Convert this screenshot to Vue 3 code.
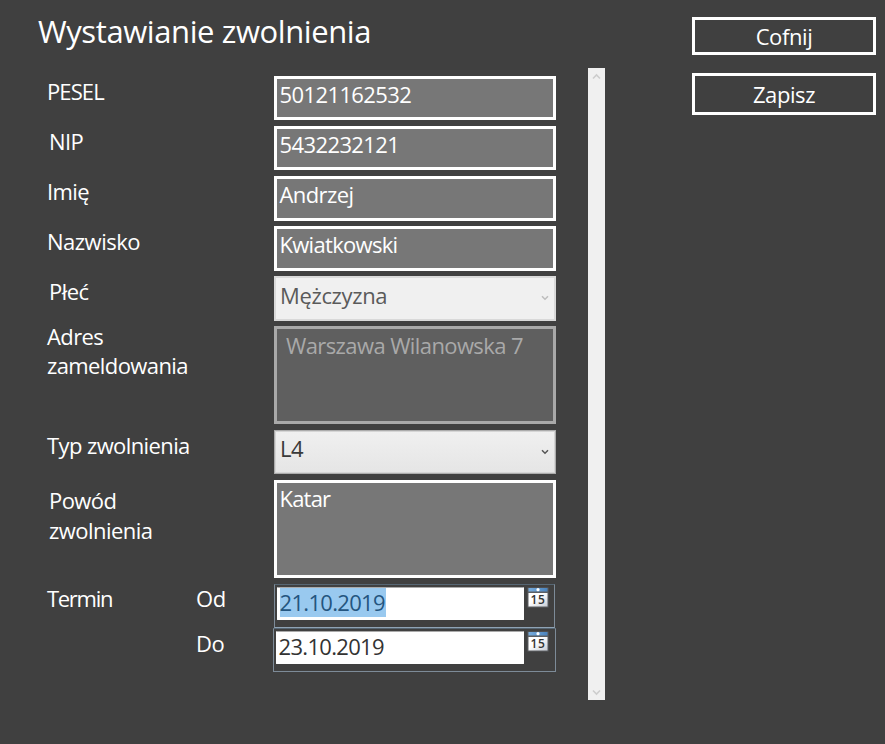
<script setup>
import { ref } from 'vue'

const rows = ref([
  { id: 'pesel', label: 'PESEL', kind: 'text', value: '50121162532' },
  { id: 'nip', label: 'NIP', kind: 'text', value: '5432232121' },
  { id: 'imie', label: 'Imię', kind: 'text', value: 'Andrzej' },
  { id: 'nazwisko', label: 'Nazwisko', kind: 'text', value: 'Kwiatkowski' },
  { id: 'plec', label: 'Płeć', kind: 'select', value: 'Mężczyzna', disabled: true },
  { id: 'adres', label: 'Adres zameldowania', kind: 'area', value: 'Warszawa Wilanowska 7', disabled: true },
  { id: 'typ', label: 'Typ zwolnienia', kind: 'select', value: 'L4' },
  { id: 'powod', label: 'Powód zwolnienia', kind: 'area', value: 'Katar' },
  { id: 'od', label: 'Termin', sub: 'Od', kind: 'date', value: '21.10.2019', selected: true },
  { id: 'do', label: '', sub: 'Do', kind: 'date', value: '23.10.2019' },
])
</script>

<template>
  <div class="window">
    <main class="form">
      <h1>Wystawianie zwolnienia</h1>
      <div v-for="row in rows" :key="row.id" class="row" :class="[row.kind, row.id]">
        <div class="label">{{ row.label }}</div>
        <div class="sub">{{ row.sub }}</div>
        <div class="control" :class="{ disabled: row.disabled }">
          <template v-if="row.kind === 'date'">
            <div class="date-input"><span :class="{ selected: row.selected }">{{ row.value }}</span></div>
            <svg class="calendar" width="22" height="21" viewBox="0 0 22 21">
              <defs>
                <linearGradient :id="'head-' + row.id" x1="0" x2="1" y1="0" y2="0">
                  <stop offset="0" stop-color="#78acdc" />
                  <stop offset="1" stop-color="#4a83bd" />
                </linearGradient>
                <linearGradient :id="'page-' + row.id" x1="0" x2="1" y1="0" y2="1">
                  <stop offset="0.4" stop-color="#ffffff" />
                  <stop offset="1" stop-color="#c9ced6" />
                </linearGradient>
              </defs>
              <rect x="0.5" y="0.5" width="21" height="20" fill="#5c5f63" />
              <rect x="1.5" y="1" width="19" height="3.5" :fill="`url(#head-${row.id})`" />
              <circle cx="11" cy="2.7" r="1.6" fill="#fff" />
              <rect x="1.5" y="6" width="19" height="13.5" :fill="`url(#page-${row.id})`" />
              <text x="11" y="17" text-anchor="middle" class="day">15</text>
            </svg>
          </template>
          <template v-else>
            <span class="value">{{ row.value }}</span>
            <svg v-if="row.kind === 'select'" class="chevron" width="8" height="6" viewBox="0 0 8 6">
              <path d="M1 1.2 L4 4.2 L7 1.2" />
            </svg>
          </template>
        </div>
      </div>
    </main>
    <div class="scrollbar">
      <svg width="9" height="7" viewBox="0 0 9 7"><path d="M1 5.5 L4.5 2 L8 5.5" /></svg>
      <svg width="9" height="7" viewBox="0 0 9 7"><path d="M1 1.5 L4.5 5 L8 1.5" /></svg>
    </div>
    <aside class="actions">
      <button class="back">Cofnij</button>
      <button class="save">Zapisz</button>
    </aside>
  </div>
</template>

<style>
body {
  background: #404040;
  overflow: hidden;
}
</style>

<style scoped>
.window {
  display: flex;
  box-sizing: border-box;
  width: 885px;
  height: 744px;
  background: #404040;
  color: #fff;
  font: 22px/30px "Open Sans", "Noto Sans", sans-serif;
  letter-spacing: -0.6px;
}
.form {
  width: 588px;
}
h1 {
  margin: 0;
  height: 66px;
  padding: 10px 0 0 38px;
  box-sizing: content-box;
  font-size: 31px;
  font-weight: 400;
  line-height: 42px;
  letter-spacing: -0.4px;
}
.row {
  display: grid;
  grid-template-columns: 149px 78px 282px;
  height: 44px;
  margin: 0 0 6px 47px;
}
.row.area {
  height: 98px;
}
.row.date {
  margin-bottom: 0;
}
.pesel .label {
  letter-spacing: -0.9px;
}
.nip .label,
.plec .label,
.powod .label {
  padding-left: 2px;
  letter-spacing: -0.55px;
}
.nazwisko .label {
  letter-spacing: -0.5px;
}
.adres .label {
  line-height: 29px;
  margin-top: -4px;
}
.powod .label {
  margin-top: 5px;
}
.od .label {
  margin-top: -1px;
  letter-spacing: -1.3px;
}
.od .sub {
  margin-top: -1px;
}
.sub {
  letter-spacing: -0.4px;
}
.control {
  display: flex;
  box-sizing: border-box;
  position: relative;
  white-space: nowrap;
}
.text .control,
.area .control {
  border: 3px solid #fff;
  background: #777;
  padding-left: 2.5px;
}
.imie .control,
.nazwisko .control {
  height: 45px;
}
.nazwisko .control {
  letter-spacing: -0.7px;
}
.powod .control {
  letter-spacing: -0.8px;
}
.adres .control {
  background: #5f5f5f;
  border-color: #a9a9a9;
  color: #a9a9a9;
  padding-left: 9px;
  padding-top: 1px;
}
.select .control {
  border: 1px solid #acacac;
  background: linear-gradient(#f0f0f0, #e5e5e5);
  color: #3a3a3a;
  padding: 2px 6px 0 5px;
  justify-content: space-between;
  box-shadow: inset 0 0 0 1px #d5d5d5;
}
.select .control.disabled {
  height: 45px;
  border: 2px solid #d9d9d9;
  background: #f0f0f0;
  box-shadow: none;
  color: #5a5a5a;
  padding: 2px 5px 0 4px;
  letter-spacing: -0.35px;
}
.chevron {
  margin-top: 16px;
  fill: none;
  stroke: #555;
  stroke-width: 1.5;
}
.disabled .chevron {
  margin-top: 15px;
  stroke: #bdbdbd;
}
.date .control {
  border: 1px solid #7d8b98;
  border-top-color: #566673;
  padding: 2px 6px 0 2px;
  justify-content: space-between;
  align-items: flex-start;
}
.od .control {
  width: 281px;
  padding-right: 5px;
  border-bottom-color: #8fa3b5;
}
.do .control {
  width: 283px;
  margin-left: -1px;
}
.date-input {
  box-sizing: border-box;
  width: 247px;
  height: 33px;
  margin-top: -0.5px;
  border: 1px solid #fff;
  border-top-color: #aaa;
  border-radius: 1px;
  background: #fff;
  color: #333;
  padding-left: 1.5px;
  letter-spacing: -0.68px;
}
.do .date-input {
  width: 248px;
}
.date-input span {
  display: block;
  width: 106px;
  height: 29px;
  line-height: 28px;
}
.date-input .selected {
  background: #99c9ef;
  color: #24557f;
}
.calendar {
  display: block;
}
.day {
  font: 600 12px "Open Sans", sans-serif;
  letter-spacing: 0.6px;
  fill: #333;
}
.scrollbar {
  display: flex;
  flex-direction: column;
  justify-content: space-between;
  align-items: center;
  box-sizing: border-box;
  width: 17px;
  height: 632px;
  margin-top: 68px;
  padding: 5px 0 4px;
  background: #f0f0f0;
}
.scrollbar path {
  fill: none;
  stroke: #cdcdcd;
  stroke-width: 1.6;
}
.actions {
  display: flex;
  flex-direction: column;
  gap: 18px;
  width: 184px;
  margin: 17px 0 0 87px;
}
button {
  box-sizing: border-box;
  height: 38px;
  padding: 0 0 1px;
  border: 3px solid #fff;
  background: #404040;
  color: inherit;
  font: inherit;
  letter-spacing: -0.4px;
}
button.save {
  height: 42px;
}
</style>
